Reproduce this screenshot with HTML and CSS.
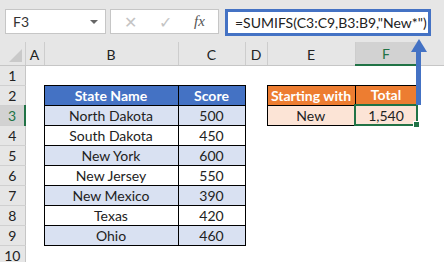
FILE: index.html
```html
<!DOCTYPE html>
<html lang="en">
<head>
  <meta charset="UTF-8" />
  <title>SUMIFS starting with</title>
  <link rel="stylesheet" href="styles.css">
</head>
<body>
  <div class="app">
    <!-- Barra de fórmulas -->
    <div class="toolbar">
      <div class="name-box">
        <span>F3</span>
        <span class="caret"></span>
      </div>
      <div class="fx-box">
        <span class="icon cancel">✕</span>
        <span class="icon enter">✓</span>
        <span class="icon fx">fx</span>
      </div>
      <div class="formula">=SUMIFS(C3:C9,B3:B9,"New*")</div>
    </div>

    <!-- Hoja -->
    <table class="sheet">
      <colgroup>
        <col class="w-hdr"><col class="w-a"><col class="w-b"><col class="w-c"><col class="w-d"><col class="w-e"><col class="w-f"><col class="w-g">
      </colgroup>
      <tr class="col-head">
        <th class="corner"><span class="tri"></span></th>
        <th>A</th><th>B</th><th>C</th><th>D</th><th>E</th><th class="active">F</th><th></th>
      </tr>
      <tr>
        <th class="row-head">1</th>
        <td></td><td></td><td></td><td></td><td></td><td></td><td></td>
      </tr>
      <tr>
        <th class="row-head">2</th>
        <td></td><td class="t-head">State Name</td><td class="t-head">Score</td><td></td>
        <td class="o-head">Starting with</td><td class="o-head">Total</td><td></td>
      </tr>
      <tr>
        <th class="row-head active">3</th>
        <td></td><td class="t-cell band">North Dakota</td><td class="t-cell band">500</td><td></td>
        <td class="o-cell">New</td><td class="o-cell selected">1,540<span class="handle"></span></td><td></td>
      </tr>
      <tr>
        <th class="row-head">4</th>
        <td></td><td class="t-cell">South Dakota</td><td class="t-cell">450</td><td></td><td></td><td></td><td></td>
      </tr>
      <tr>
        <th class="row-head">5</th>
        <td></td><td class="t-cell band">New York</td><td class="t-cell band">600</td><td></td><td></td><td></td><td></td>
      </tr>
      <tr>
        <th class="row-head">6</th>
        <td></td><td class="t-cell">New Jersey</td><td class="t-cell">550</td><td></td><td></td><td></td><td></td>
      </tr>
      <tr>
        <th class="row-head">7</th>
        <td></td><td class="t-cell band">New Mexico</td><td class="t-cell band">390</td><td></td><td></td><td></td><td></td>
      </tr>
      <tr>
        <th class="row-head">8</th>
        <td></td><td class="t-cell">Texas</td><td class="t-cell">420</td><td></td><td></td><td></td><td></td>
      </tr>
      <tr>
        <th class="row-head">9</th>
        <td></td><td class="t-cell band">Ohio</td><td class="t-cell band">460</td><td></td><td></td><td></td><td></td>
      </tr>
      <tr>
        <th class="row-head">10</th>
        <td></td><td></td><td></td><td></td><td></td><td></td><td></td>
      </tr>
    </table>

    <!-- Flecha -->
    <svg class="arrow" width="20" height="66" viewBox="0 0 20 66">
      <polygon points="10,0 18,13 2,13" fill="#4472c4" />
      <rect x="7" y="12" width="5" height="54" fill="#4472c4" />
    </svg>
  </div>
</body>
</html>
```

FILE: styles.css
```css
body {
  margin: 0;
  background: #fff;
}

.app {
  position: relative;
  width: 444px;
  height: 262px;
  overflow: hidden;
  font-family: 'Lato', sans-serif;
  color: #222;
}

.toolbar {
  display: flex;
  align-items: flex-start;
  height: 42px;
  padding-top: 9px;
  padding-left: 5px;
  box-sizing: border-box;
  background: #e6e6e6;
}

.name-box {
  width: 101px;
  height: 25px;
  box-sizing: border-box;
  background: #fff;
  border: 1px solid #c6c6c6;
  display: flex;
  align-items: center;
  justify-content: space-between;
  padding: 0 7px 0 7px;
  font-size: 14px;
  color: #333;
}

.caret {
  width: 0;
  height: 0;
  border-left: 4px solid transparent;
  border-right: 4px solid transparent;
  border-top: 4px solid #666;
}

.fx-box {
  margin-left: 4px;
  width: 109px;
  height: 25px;
  box-sizing: border-box;
  background: #fff;
  border: 1px solid #c6c6c6;
  display: flex;
  align-items: center;
  padding-left: 13px;
}

.icon {
  color: #c4c4c4;
  font-size: 16px;
}

.enter {
  margin-left: 22px;
}

.fx {
  margin-left: 22px;
  font-family: 'Liberation Serif', serif;
  font-style: italic;
  color: #555;
  font-size: 15px;
}

.formula {
  margin-left: 6px;
  width: 206px;
  height: 27px;
  box-sizing: border-box;
  background: #fff;
  border: 3px solid #4472c4;
  font-size: 14px;
  line-height: 21px;
  padding-left: 7px;
  white-space: nowrap;
  color: #222;
}

.sheet {
  table-layout: fixed;
  border-collapse: collapse;
  width: 444px;
  font-size: 14px;
}

.w-hdr { width: 25px; }
.w-a { width: 19px; }
.w-b { width: 134px; }
.w-c { width: 67px; }
.w-d { width: 22px; }
.w-e { width: 88px; }
.w-f { width: 62px; }
.w-g { width: 27px; }

.sheet tr {
  height: 20px;
}

.sheet td {
  padding: 0;
  text-align: center;
}

.col-head th {
  height: 22px;
  background: #e6e6e6;
  border-right: 1px solid #cdcdcd;
  border-bottom: 1px solid #c6c6c6;
  font-weight: normal;
  color: #222;
  padding: 0;
  vertical-align: bottom;
  line-height: 20px;
}

.col-head th.active {
  background: #d2d2d2;
  color: #217346;
  border-bottom: 2px solid #217346;
}

.corner {
  position: relative;
}

.tri {
  position: absolute;
  right: 3px;
  bottom: 3px;
  width: 0;
  height: 0;
  border-left: 13px solid transparent;
  border-bottom: 13px solid #c9c9c9;
}

.row-head {
  background: #e6e6e6;
  border-right: 1px solid #c6c6c6;
  border-bottom: 1px solid #d0d0d0;
  font-weight: normal;
  color: #222;
  padding: 0;
}

.row-head.active {
  background: #d2d2d2;
  color: #217346;
  border-right: 2px solid #217346;
}

.t-head {
  background: #4472c4;
  color: #fff;
  font-weight: bold;
  border: 1px solid #000;
}

.t-cell {
  border: 1px solid #000;
  background: #fff;
}

.t-cell.band {
  background: #d9e1f2;
}

.o-head {
  background: #ed7d31;
  color: #fff;
  font-weight: bold;
  border: 1px solid #000;
}

.o-cell {
  background: #fce4d6;
  border: 1px solid #000;
}

.o-cell.selected {
  position: relative;
  border: 2px solid #217346;
}

.handle {
  position: absolute;
  right: -4px;
  bottom: -4px;
  width: 5px;
  height: 5px;
  background: #217346;
  border: 1px solid #fff;
}

.arrow {
  position: absolute;
  left: 409px;
  top: 39px;
}
```
